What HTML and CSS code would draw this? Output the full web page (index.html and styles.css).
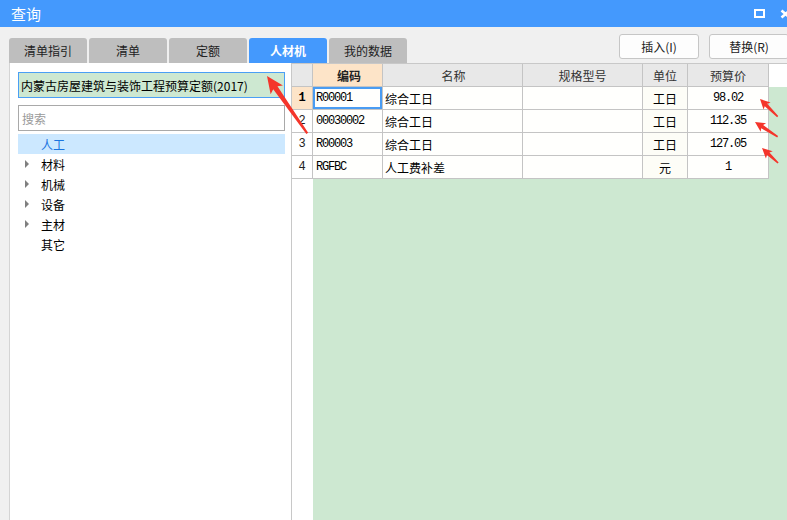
FILE: index.html
```html
<!DOCTYPE html>
<html lang="zh-CN">
<head>
<meta charset="utf-8">
<title>查询</title>
<link rel="stylesheet" href="styles.css">
</head>
<body>
<div class="window">
  <div class="titlebar">
    <span class="title">查询</span>
    <div class="winbtns">
      <svg width="11" height="10" viewBox="0 0 11 10"><rect x="1" y="1" width="9" height="7" fill="none" stroke="#fff" stroke-width="2"/></svg>
      <svg width="12" height="10" viewBox="0 0 12 10"><path d="M1.5 1.5 L9.5 8.5 M9.5 1.5 L1.5 8.5" stroke="#fff" stroke-width="2.6" fill="none"/></svg>
    </div>
  </div>

  <div class="toolbar">
    <div class="tabs">
      <div class="tab">清单指引</div>
      <div class="tab">清单</div>
      <div class="tab">定额</div>
      <div class="tab active">人材机</div>
      <div class="tab">我的数据</div>
    </div>
    <div class="actions">
      <div class="btn">插入(I)</div>
      <div class="btn">替换(R)</div>
    </div>
  </div>

  <div class="main">
    <div class="left">
      <div class="combo">内蒙古房屋建筑与装饰工程预算定额(2017)</div>
      <div class="search">搜索</div>
      <div class="tree">
        <div class="node sel"><span class="caret"></span>人工</div>
        <div class="node"><span class="caret"><i class="tri"></i></span>材料</div>
        <div class="node"><span class="caret"><i class="tri"></i></span>机械</div>
        <div class="node"><span class="caret"><i class="tri"></i></span>设备</div>
        <div class="node"><span class="caret"><i class="tri"></i></span>主材</div>
        <div class="node"><span class="caret"></span>其它</div>
      </div>
    </div>

    <div class="grid">
      <div class="ghead">
        <div class="c rh"></div>
        <div class="c w-code hl">编码</div>
        <div class="c w-name">名称</div>
        <div class="c w-spec">规格型号</div>
        <div class="c w-unit">单位</div>
        <div class="c w-price">预算价</div>
      </div>
      <div class="gbody">
        <div class="rhcol">
          <div class="c rh cur">1</div>
          <div class="c rh">2</div>
          <div class="c rh">3</div>
          <div class="c rh">4</div>
        </div>
        <div class="gdata">
          <div class="row">
            <div class="c w-code mono sel">R00001</div>
            <div class="c w-name">综合工日</div>
            <div class="c w-spec"></div>
            <div class="c w-unit">工日</div>
            <div class="c w-price mono">98.02</div>
          </div>
          <div class="row">
            <div class="c w-code mono">00030002</div>
            <div class="c w-name">综合工日</div>
            <div class="c w-spec"></div>
            <div class="c w-unit">工日</div>
            <div class="c w-price mono">112.35</div>
          </div>
          <div class="row">
            <div class="c w-code mono">R00003</div>
            <div class="c w-name">综合工日</div>
            <div class="c w-spec"></div>
            <div class="c w-unit">工日</div>
            <div class="c w-price mono">127.05</div>
          </div>
          <div class="row">
            <div class="c w-code mono">RGFBC</div>
            <div class="c w-name">人工费补差</div>
            <div class="c w-spec"></div>
            <div class="c w-unit">元</div>
            <div class="c w-price mono">1</div>
          </div>
        </div>
      </div>
    </div>
  </div>

  <svg class="marks" width="787" height="520" viewBox="0 0 787 520">
    <g fill="#f4352b">
      <polygon transform="translate(267 76) rotate(54.9)" points="0,0 17,-7.5 14.5,-2.6 70,-1.1 70,1.1 14.5,2.6 17,7.5"/>
      <polygon transform="translate(760 99) rotate(45)" points="0,0 10,-5 8.5,-1.8 25,-0.8 25,0.8 8.5,1.8 10,5"/>
      <polygon transform="translate(755 122) rotate(33)" points="0,0 10,-5 8.5,-1.8 27,-0.8 27,0.8 8.5,1.8 10,5"/>
      <polygon transform="translate(762 148) rotate(43)" points="0,0 10,-5 8.5,-1.8 22,-0.8 22,0.8 8.5,1.8 10,5"/>
    </g>
  </svg>
</div>
</body>
</html>
```

FILE: styles.css
```css
* { box-sizing: border-box; }
html, body { margin: 0; padding: 0; overflow: hidden; }
body {
  width: 787px;
  height: 520px;
  background: #f0f0f0;
  font-family: "Noto Sans CJK SC", "Noto Sans", sans-serif;
  font-size: 12px;
  color: #000;
}
.window {
  position: relative;
  width: 787px;
  height: 520px;
  display: flex;
  flex-direction: column;
  overflow: hidden;
}

/* title bar */
.titlebar {
  flex: none;
  height: 27px;
  background: #4499fd;
  display: flex;
  align-items: center;
  padding-left: 11px;
}
.title { color: #fff; font-size: 15px; line-height: 1; }
.winbtns {
  margin-left: auto;
  margin-right: -5px;
  display: flex;
  align-items: center;
  gap: 15px;
}

/* toolbar */
.toolbar {
  flex: none;
  height: 36px;
  display: flex;
  padding-left: 9px;
}
.tabs { display: flex; gap: 2px; align-self: flex-end; }
.tab {
  width: 78px;
  height: 25px;
  background: #bebebe;
  border-radius: 3px 3px 0 0;
  display: flex;
  align-items: center;
  justify-content: center;
  color: #222;
  font-size: 12px;
}
.tab.active { background: #4499fd; color: #fff; font-weight: bold; }
.actions {
  margin-left: auto;
  margin-right: -2px;
  margin-top: 7px;
  display: flex;
  gap: 10px;
}
.btn {
  width: 80px;
  height: 25px;
  background: #fdfdfd;
  border: 1px solid #c6c6c6;
  border-radius: 3px;
  display: flex;
  align-items: center;
  justify-content: center;
  color: #222;
  font-size: 12px;
}

/* main */
.main { flex: 1; display: flex; min-height: 0; }
.left {
  flex: none;
  margin-left: 9px;
  width: 282px;
  background: #fff;
  border-left: 1px solid #d4d4d4;
  padding: 9px 6px 0 8px;
  display: flex;
  flex-direction: column;
}
.combo {
  height: 26px;
  background: #cde8d1;
  border: 1px solid #4a9ff5;
  padding-left: 2px;
  display: flex;
  align-items: center;
  white-space: nowrap;
}
.search {
  margin-top: 7px;
  height: 26px;
  border: 1px solid #a9a9a9;
  padding-left: 3px;
  display: flex;
  align-items: center;
  color: #9a9a9a;
}
.tree { margin-top: 3px; }
.node {
  height: 20px;
  display: flex;
  align-items: center;
  padding-left: 7px;
}
.node.sel { background: #cce8ff; color: #1b74df; }
.caret { flex: none; width: 16px; display: flex; align-items: center; }
.tri {
  display: block;
  width: 0;
  height: 0;
  border-left: 4px solid #7f7f7f;
  border-top: 4px solid transparent;
  border-bottom: 4px solid transparent;
}

/* grid */
.grid {
  flex: 1;
  display: flex;
  flex-direction: column;
  background: #fff;
  border-top: 1px solid #c8c8c8;
  border-left: 1px solid #c8c8c8;
}
.ghead { flex: none; display: flex; height: 23px; }
.c {
  flex: none;
  height: 23px;
  border-right: 1px solid #c4c4c4;
  border-bottom: 1px solid #c4c4c4;
  display: flex;
  align-items: center;
  white-space: nowrap;
  overflow: hidden;
}
.ghead .c { background: #e8e8e8; color: #333; justify-content: center; }
.ghead .c.hl { background: #fde4c8; color: #222; font-weight: bold; }
.rh { width: 21px; justify-content: center; font-family: "Liberation Mono", monospace; }
.w-code { width: 70px; padding-left: 3px; }
.w-name { width: 140px; padding-left: 2px; }
.w-spec { width: 120px; }
.w-unit { width: 45px; justify-content: center; }
.w-price { width: 81px; justify-content: center; }
.gbody { flex: 1; display: flex; min-height: 0; }
.rhcol { flex: none; width: 21px; background: #fff; }
.rhcol .c { background: #fff; color: #222; }
.rhcol .c.cur { background: #fde4c8; font-weight: bold; color: #000; }
.gdata { flex: 1; background: #cde8d1; }
.row { display: flex; }
.row .c { background: #fffffd; }
.row .w-unit { background: #fdfdf7; }
.mono {
  font-family: "Liberation Mono", monospace;
  font-size: 12px;
  letter-spacing: -1.2px;
}
.row .c.sel { box-shadow: inset 0 0 0 2px #4a9cf2; }

/* annotation arrows */
.marks { position: absolute; left: 0; top: 0; pointer-events: none; }
```
